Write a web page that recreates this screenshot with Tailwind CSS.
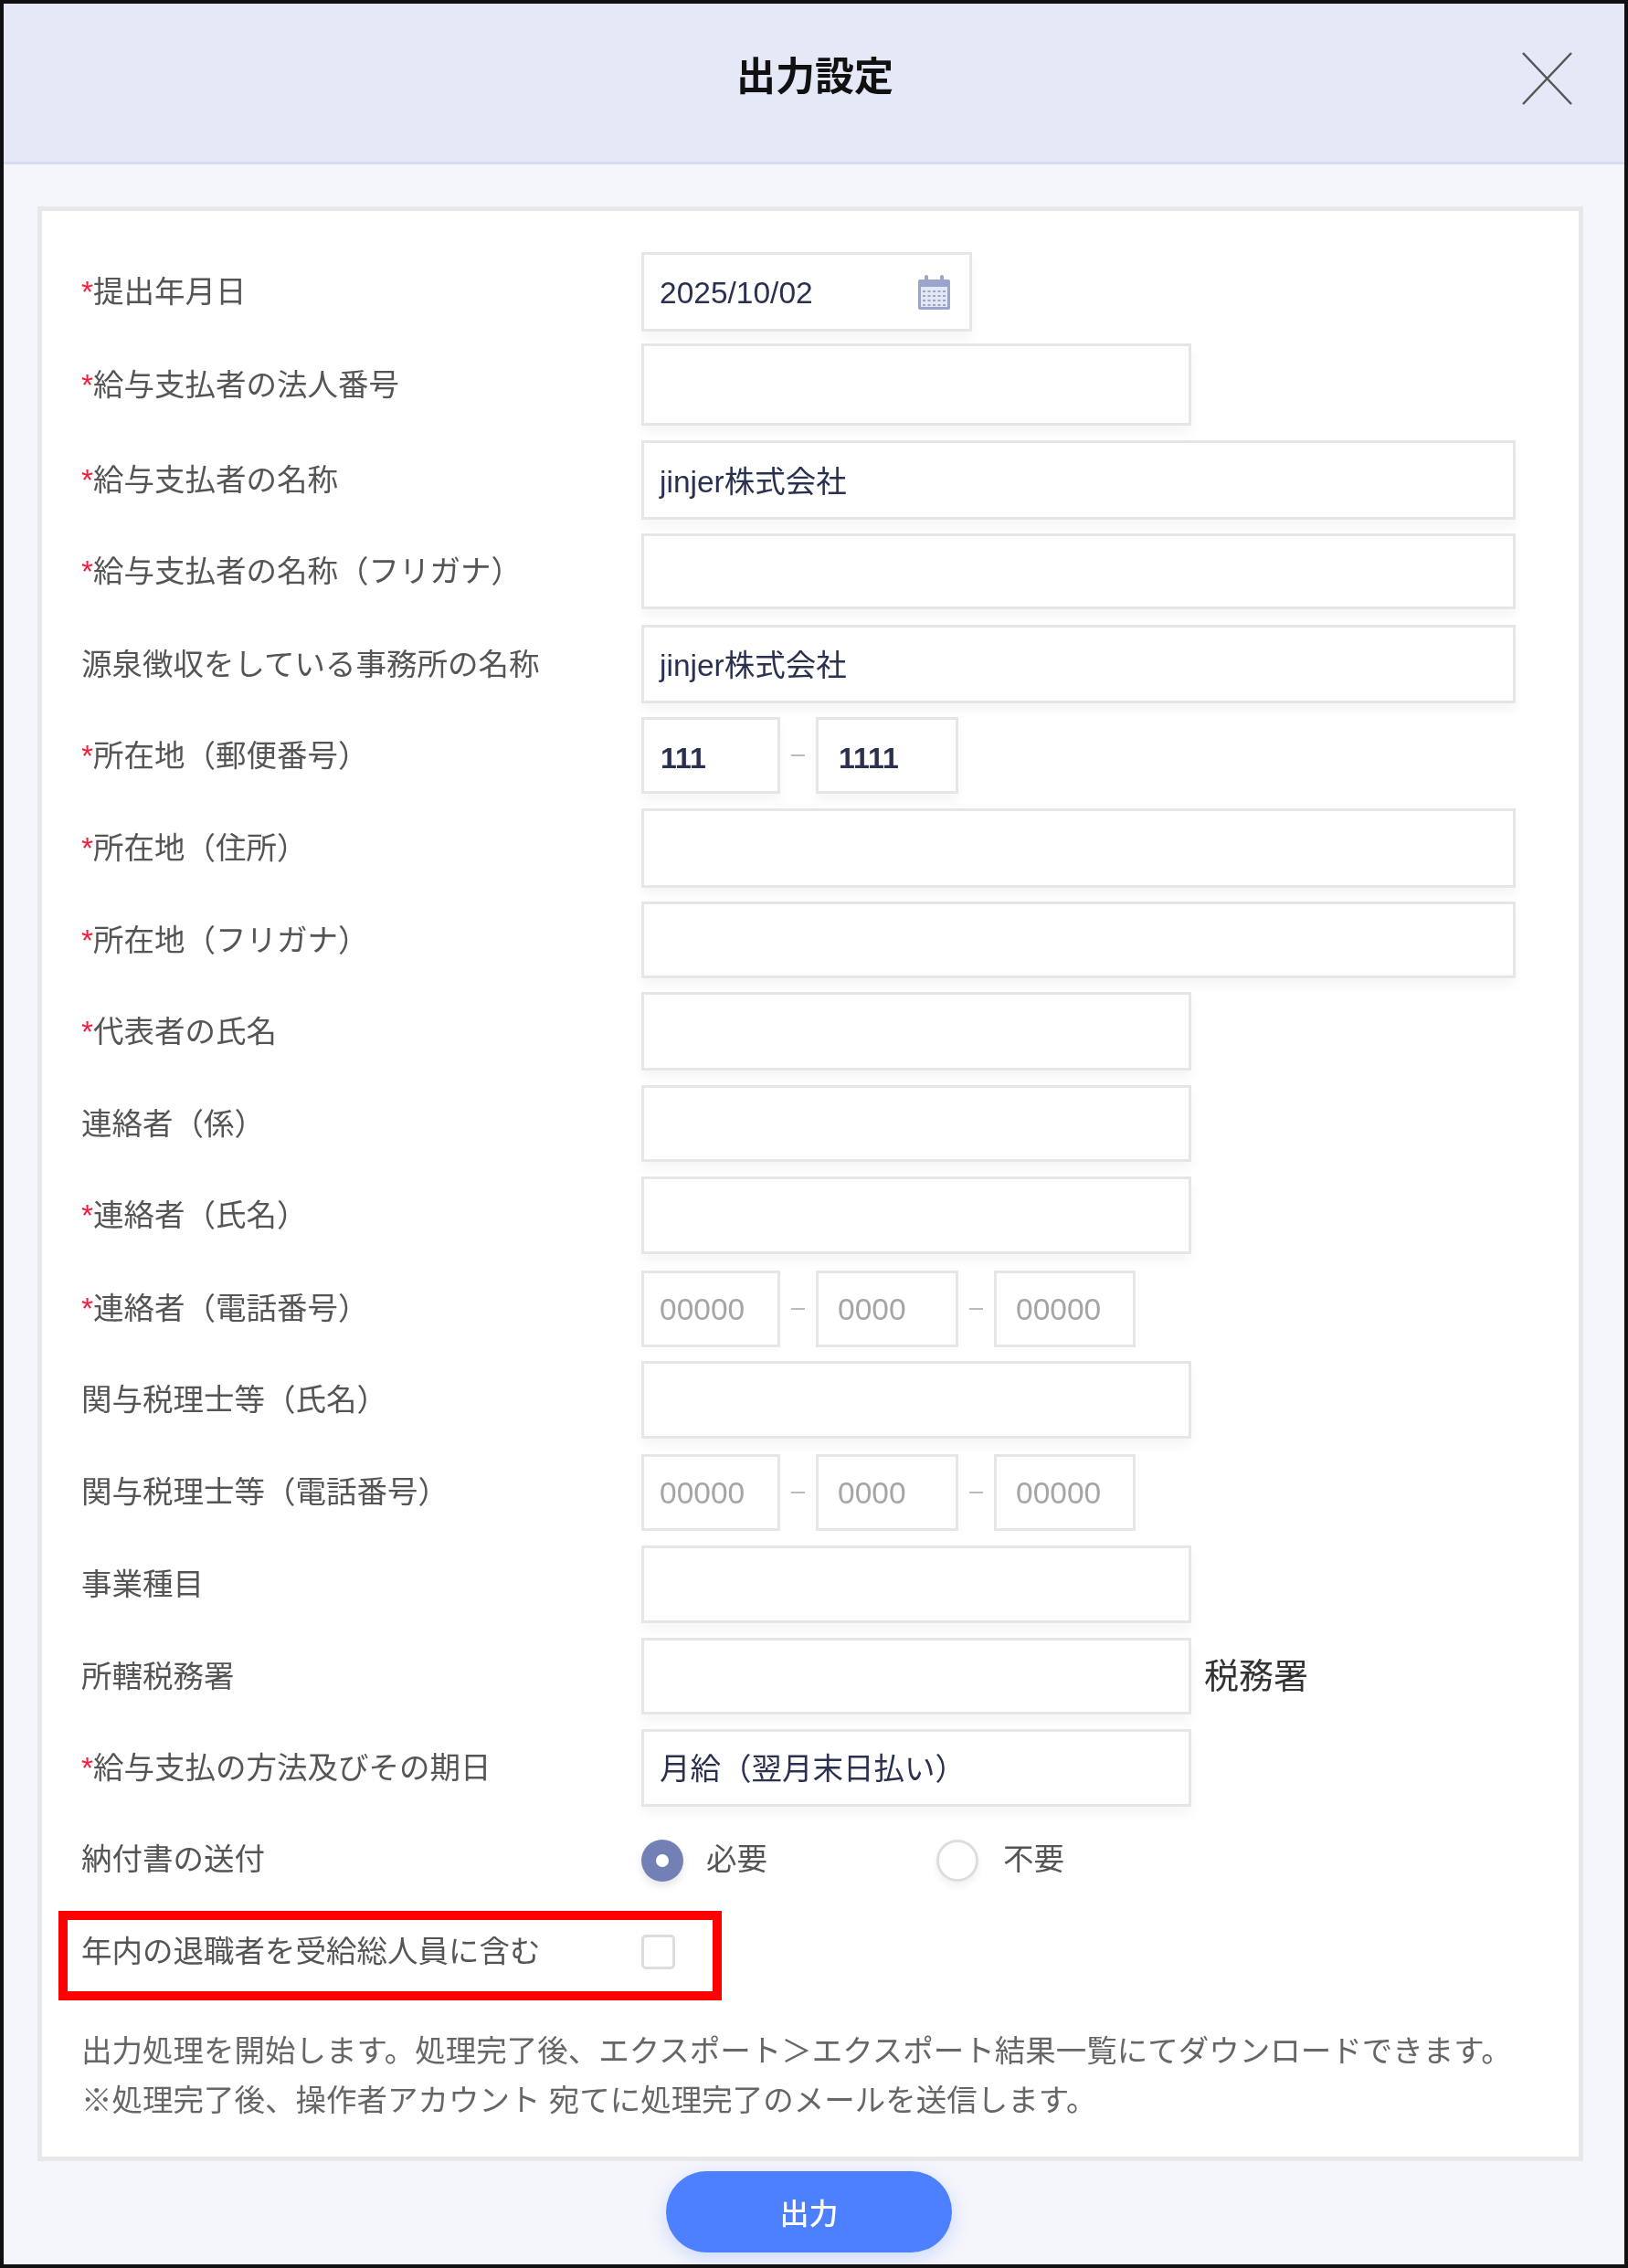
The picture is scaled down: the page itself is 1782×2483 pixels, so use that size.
<!DOCTYPE html>
<html lang="ja">

<head>
    <meta charset="UTF-8">
    <title>出力設定</title>
    <script src="https://cdn.jsdelivr.net/npm/@tailwindcss/browser@4"></script>
</head>

<body class="bg-white font-['Liberation_Sans','Noto_Sans_CJK_JP',sans-serif] text-[33.5px] text-[#555]">
    <div class="w-[1782px] h-[2483px] border-[4px] border-[#111] bg-[#f5f6fb] relative overflow-hidden blur-[0.5px]">
        <!-- Header -->
        <div class="h-[176px] bg-[#e4e8f7] border-b-[3px] border-[#d6dbef] flex items-center justify-center pb-[12px] pl-[2px]">
            <h1 class="text-[43px] font-bold text-[#111]">出力設定</h1>
        </div>
        <button class="absolute left-[1662px] top-[53px] w-[55px] h-[58px]">
            <svg viewBox="0 0 55 58" class="w-full h-full" fill="none" stroke="#555" stroke-width="2.5">
                <path d="M1 1 L54 57 M54 1 L1 57" />
            </svg>
        </button>

        <!-- Form card -->
        <div class="mt-[46px] ml-[37px] w-[1692px] bg-white border-[5px] border-[#e8e8e8] pt-[45px] pb-[34px] pl-[43px]">

            <div class="flex items-center">
                <div class="w-[613px] pt-[2px]"><span class="text-[#f02040]">*</span>提出年月日</div>
                <div class="w-[362px] h-[87px] border-[3px] border-[#e6e6e6] shadow-[0_8px_12px_rgba(0,0,0,0.04)] flex items-center justify-between pl-[17px] pr-[21px] text-[#2a3050]">
                    <span class="pt-[3px]">2025/10/02</span>
                    <svg viewBox="0 0 35 38" class="w-[35px] h-[38px]">
                        <rect x="0" y="5" width="35" height="33" rx="2" fill="#9aa5cc" />
                        <rect x="7" y="0" width="4" height="9" rx="2" fill="#9aa5cc" />
                        <rect x="24" y="0" width="4" height="9" rx="2" fill="#9aa5cc" />
                        <rect x="3" y="13" width="29" height="22" fill="#e4e8f4" />
                        <path d="M5 18H30M5 23H30M5 28H30M5 33H30" stroke="#9aa5cc" stroke-width="2" stroke-dasharray="3 2.5" />
                    </svg>
                </div>
            </div>

            <div class="flex items-center mt-[13px]">
                <div class="w-[613px] pt-[2px]"><span class="text-[#f02040]">*</span>給与支払者の法人番号</div>
                <div class="w-[602px] h-[90px] border-[3px] border-[#e6e6e6] shadow-[0_8px_12px_rgba(0,0,0,0.04)]"></div>
            </div>

            <div class="flex items-center mt-[16px]">
                <div class="w-[613px] pt-[2px]"><span class="text-[#f02040]">*</span>給与支払者の名称</div>
                <div class="w-[957px] h-[87px] border-[3px] border-[#e6e6e6] shadow-[0_8px_12px_rgba(0,0,0,0.04)] flex items-center pl-[17px] pt-[5px] text-[#2a3050]">jinjer株式会社</div>
            </div>

            <div class="flex items-center mt-[15px]">
                <div class="w-[613px] pt-[2px]"><span class="text-[#f02040]">*</span>給与支払者の名称（フリガナ）</div>
                <div class="w-[957px] h-[83px] border-[3px] border-[#e6e6e6] shadow-[0_8px_12px_rgba(0,0,0,0.04)]"></div>
            </div>

            <div class="flex items-center mt-[17px]">
                <div class="w-[613px] pt-[2px]">源泉徴収をしている事務所の名称</div>
                <div class="w-[957px] h-[86px] border-[3px] border-[#e6e6e6] shadow-[0_8px_12px_rgba(0,0,0,0.04)] flex items-center pl-[17px] pt-[5px] text-[#2a3050]">jinjer株式会社</div>
            </div>

            <div class="flex items-center mt-[15px]">
                <div class="w-[613px] pt-[2px]"><span class="text-[#f02040]">*</span>所在地（郵便番号）</div>
                <div class="w-[152px] h-[84px] border-[3px] border-[#e6e6e6] shadow-[0_8px_12px_rgba(0,0,0,0.04)] flex items-center pl-[18px] pt-[5px] text-[32px] font-semibold text-[#2a3050]">111</div>
                <div class="w-[39px] flex justify-center"><span class="w-[15px] h-[2px] bg-[#bbb]"></span></div>
                <div class="w-[156px] h-[84px] border-[3px] border-[#e6e6e6] shadow-[0_8px_12px_rgba(0,0,0,0.04)] flex items-center pl-[22px] pt-[5px] text-[32px] font-semibold text-[#2a3050]">1111</div>
            </div>

            <div class="flex items-center mt-[16px]">
                <div class="w-[613px] pt-[2px]"><span class="text-[#f02040]">*</span>所在地（住所）</div>
                <div class="w-[957px] h-[87px] border-[3px] border-[#e6e6e6] shadow-[0_8px_12px_rgba(0,0,0,0.04)]"></div>
            </div>

            <div class="flex items-center mt-[15px]">
                <div class="w-[613px] pt-[2px]"><span class="text-[#f02040]">*</span>所在地（フリガナ）</div>
                <div class="w-[957px] h-[84px] border-[3px] border-[#e6e6e6] shadow-[0_8px_12px_rgba(0,0,0,0.04)]"></div>
            </div>

            <div class="flex items-center mt-[15px]">
                <div class="w-[613px] pt-[2px]"><span class="text-[#f02040]">*</span>代表者の氏名</div>
                <div class="w-[602px] h-[86px] border-[3px] border-[#e6e6e6] shadow-[0_8px_12px_rgba(0,0,0,0.04)]"></div>
            </div>

            <div class="flex items-center mt-[16px]">
                <div class="w-[613px] pt-[2px]">連絡者（係）</div>
                <div class="w-[602px] h-[84px] border-[3px] border-[#e6e6e6] shadow-[0_8px_12px_rgba(0,0,0,0.04)]"></div>
            </div>

            <div class="flex items-center mt-[16px]">
                <div class="w-[613px] pt-[2px]"><span class="text-[#f02040]">*</span>連絡者（氏名）</div>
                <div class="w-[602px] h-[85px] border-[3px] border-[#e6e6e6] shadow-[0_8px_12px_rgba(0,0,0,0.04)]"></div>
            </div>

            <div class="flex items-center mt-[18px]">
                <div class="w-[613px]"><span class="text-[#f02040]">*</span>連絡者（電話番号）</div>
                <div class="w-[152px] h-[84px] border-[3px] border-[#e6e6e6] flex items-center pl-[17px] pt-[3px] text-[#a5a5a5]">00000</div>
                <div class="w-[39px] flex justify-center"><span class="w-[15px] h-[2px] bg-[#bbb]"></span></div>
                <div class="w-[156px] h-[84px] border-[3px] border-[#e6e6e6] flex items-center pl-[21px] pt-[3px] text-[#a5a5a5]">0000</div>
                <div class="w-[39px] flex justify-center"><span class="w-[15px] h-[2px] bg-[#bbb]"></span></div>
                <div class="w-[155px] h-[84px] border-[3px] border-[#e6e6e6] flex items-center pl-[21px] pt-[3px] text-[#a5a5a5]">00000</div>
            </div>

            <div class="flex items-center mt-[15px]">
                <div class="w-[613px] pt-[2px]">関与税理士等（氏名）</div>
                <div class="w-[602px] h-[85px] border-[3px] border-[#e6e6e6] shadow-[0_8px_12px_rgba(0,0,0,0.04)]"></div>
            </div>

            <div class="flex items-center mt-[17px]">
                <div class="w-[613px]">関与税理士等（電話番号）</div>
                <div class="w-[152px] h-[84px] border-[3px] border-[#e6e6e6] flex items-center pl-[17px] pt-[3px] text-[#a5a5a5]">00000</div>
                <div class="w-[39px] flex justify-center"><span class="w-[15px] h-[2px] bg-[#bbb]"></span></div>
                <div class="w-[156px] h-[84px] border-[3px] border-[#e6e6e6] flex items-center pl-[21px] pt-[3px] text-[#a5a5a5]">0000</div>
                <div class="w-[39px] flex justify-center"><span class="w-[15px] h-[2px] bg-[#bbb]"></span></div>
                <div class="w-[155px] h-[84px] border-[3px] border-[#e6e6e6] flex items-center pl-[21px] pt-[3px] text-[#a5a5a5]">00000</div>
            </div>

            <div class="flex items-center mt-[16px]">
                <div class="w-[613px] pt-[2px]">事業種目</div>
                <div class="w-[602px] h-[85px] border-[3px] border-[#e6e6e6] shadow-[0_8px_12px_rgba(0,0,0,0.04)]"></div>
            </div>

            <div class="flex items-center mt-[16px]">
                <div class="w-[613px] pt-[2px]">所轄税務署</div>
                <div class="w-[602px] h-[84px] border-[3px] border-[#e6e6e6] shadow-[0_8px_12px_rgba(0,0,0,0.04)]"></div>
                <div class="ml-[14px] text-[38px] text-[#333]">税務署</div>
            </div>

            <div class="flex items-center mt-[16px]">
                <div class="w-[613px] pt-[2px]"><span class="text-[#f02040]">*</span>給与支払の方法及びその期日</div>
                <div class="w-[602px] h-[85px] border-[3px] border-[#e6e6e6] shadow-[0_8px_12px_rgba(0,0,0,0.04)] flex items-center pl-[17px] pt-[4px] text-[#2a3050]">月給（翌月末日払い）</div>
            </div>

            <!-- Radio -->
            <div class="flex items-center h-[47px] mt-[35px]">
                <div class="w-[613px]">納付書の送付</div>
                <div class="w-[46px] h-[46px] rounded-full bg-[#7280b5] shadow-[0_5px_8px_rgba(0,0,0,0.1)] flex items-center justify-center">
                    <span class="w-[14px] h-[14px] rounded-full bg-white"></span>
                </div>
                <div class="ml-[25px] w-[252px]">必要</div>
                <div class="w-[46px] h-[46px] rounded-full bg-white border-[3px] border-[#ddd] shadow-[0_5px_8px_rgba(0,0,0,0.06)]"></div>
                <div class="ml-[27px]">不要</div>
            </div>

            <!-- Checkbox row with the red annotation -->
            <div class="flex items-center h-[38px] mt-[58px] relative">
                <div class="w-[613px]">年内の退職者を受給総人員に含む</div>
                <div class="w-[37px] h-[38px] rounded-[5px] border-[3px] border-[#ddd] bg-white"></div>
                <div class="absolute left-[-25px] top-[-26px] w-[726px] h-[98px] border-[10px] border-[#ff0000]"></div>
            </div>

            <p class="mt-[63px] leading-[54px] whitespace-nowrap text-[#666]">
                出力処理を開始します。処理完了後、エクスポート＞エクスポート結果一覧にてダウンロードできます。<br>
                ※処理完了後、操作者アカウント 宛てに処理完了のメールを送信します。
            </p>
        </div>

        <!-- Submit -->
        <div class="flex justify-center mt-[11px] pr-[11px]">
            <button class="w-[313px] h-[89px] pt-[5px] rounded-full bg-[#4c80ff] text-white text-[32px] font-medium shadow-[0_6px_20px_rgba(76,128,255,0.25)]">出力</button>
        </div>
    </div>
</body>

</html>
